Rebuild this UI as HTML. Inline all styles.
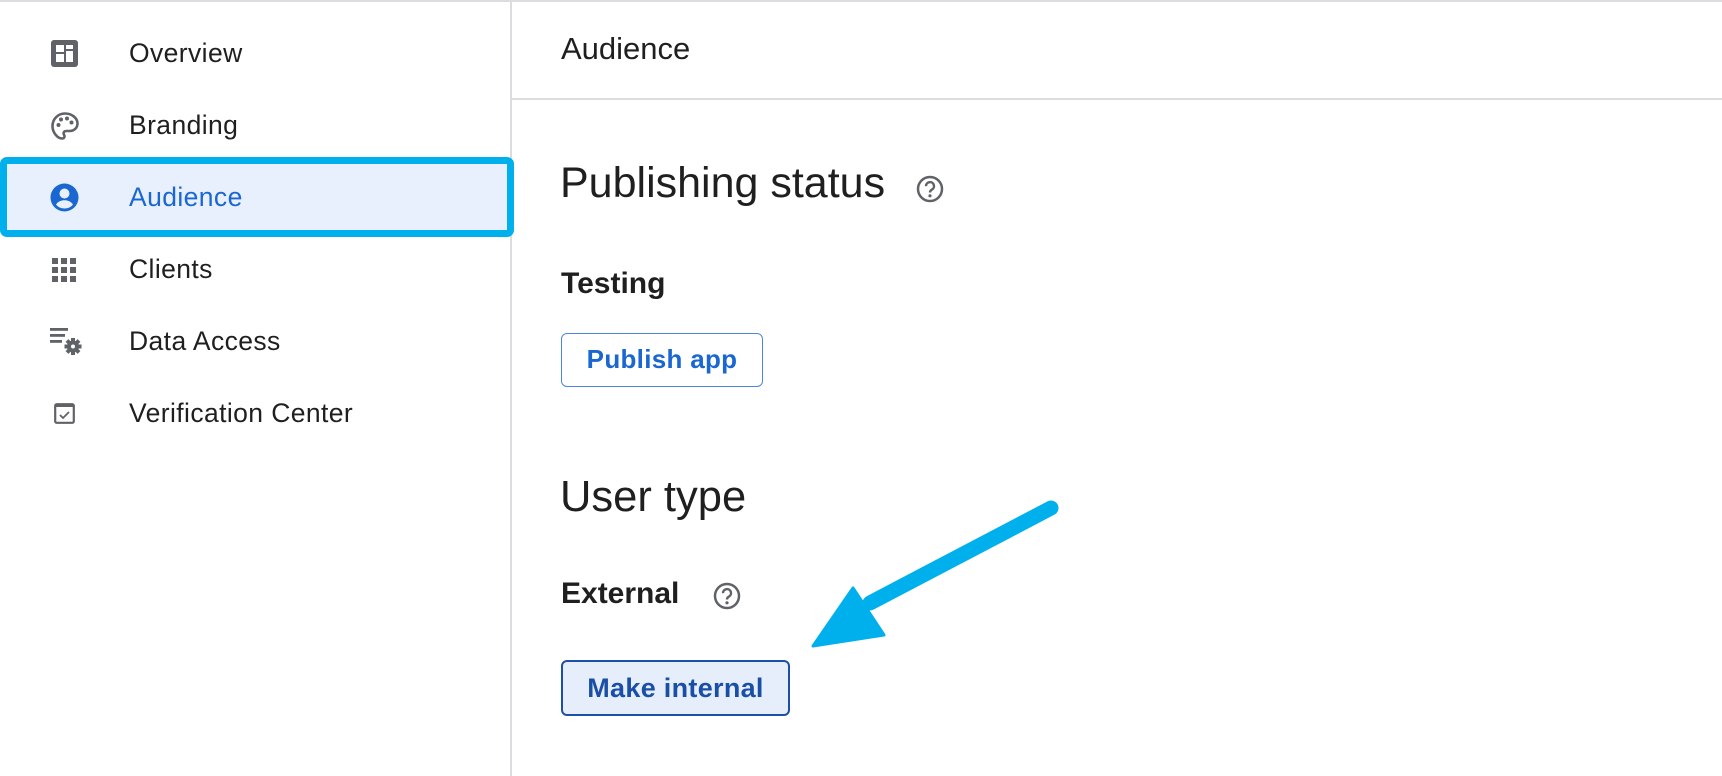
<!DOCTYPE html>
<html><head><style>
*{margin:0;padding:0;box-sizing:border-box}
body{width:1722px;height:776px;background:#fff;font-family:"Liberation Sans",Arial,sans-serif;position:relative;overflow:hidden;color:#1f1f1f}
.abs{position:absolute}
.nav{position:absolute;left:129px;font-size:26.5px;letter-spacing:0.4px;color:#1f1f1f;line-height:30px}
.ic{position:absolute;left:50px}
</style></head><body>
<div class="abs" style="left:0;top:0;width:1722px;height:2px;background:#dadce0"></div>
<div class="abs" style="left:510px;top:0;width:2px;height:776px;background:#dadce0"></div>
<div class="abs" style="left:512px;top:98px;width:1210px;height:2px;background:#dadce0"></div>

<div class="abs" style="left:0;top:157px;width:514px;height:80px;border:7px solid #00b0ec;border-radius:7px;background:#e8f0fe"></div>

<svg class="ic" style="top:39px" width="29" height="29" viewBox="0 0 29 29"><rect x="1" y="1" width="27" height="27" rx="3" fill="#5f6368"/><rect x="6" y="6" width="8" height="7" fill="#fff"/><rect x="6" y="15" width="8" height="8" fill="#fff"/><rect x="16" y="6" width="7" height="4" fill="#fff"/><rect x="16" y="12" width="7" height="11" fill="#fff"/></svg>
<div class="nav" style="top:38px">Overview</div>

<svg class="ic" style="top:111px" width="30" height="30" viewBox="0 0 30 30"><path d="M15 2.5C8 2.5 2.5 8 2.5 15c0 6.5 5 12.5 9.5 12.5 2.5 0 3-2 2-3.8-1-1.8 0-3.7 2.2-3.7h3.5c4.5 0 7.8-3.2 7.8-7.5C27.5 7 21.8 2.5 15 2.5z" fill="none" stroke="#5f6368" stroke-width="2.6"/><circle cx="8.5" cy="14" r="2" fill="#5f6368"/><circle cx="11" cy="8.5" r="2" fill="#5f6368"/><circle cx="17" cy="7.5" r="2" fill="#5f6368"/><circle cx="21.5" cy="11.5" r="2" fill="#5f6368"/></svg>
<div class="nav" style="top:110px">Branding</div>

<svg class="ic" style="top:183px" width="29" height="29" viewBox="0 0 29 29"><circle cx="14.5" cy="14.5" r="14" fill="#1a67d2"/><circle cx="14.5" cy="10.5" r="5" fill="#e8f0fe"/><path d="M6 21.5c2-3 5-4.3 8.5-4.3s6.5 1.3 8.5 4.3c-2 2.6-5 4-8.5 4s-6.5-1.4-8.5-4z" fill="#e8f0fe"/></svg>
<div class="nav" style="top:182px;color:#1a67d2">Audience</div>

<svg class="ic" style="top:258px;left:52px" width="25" height="25" viewBox="0 0 25 25" fill="#5f6368"><rect x="0" y="0" width="6" height="6"/><rect x="9" y="0" width="6" height="6"/><rect x="18" y="0" width="6" height="6"/><rect x="0" y="9" width="6" height="6"/><rect x="9" y="9" width="6" height="6"/><rect x="18" y="9" width="6" height="6"/><rect x="0" y="18" width="6" height="6"/><rect x="9" y="18" width="6" height="6"/><rect x="18" y="18" width="6" height="6"/></svg>
<div class="nav" style="top:254px">Clients</div>

<svg class="ic" style="top:328px" width="32" height="28" viewBox="0 0 32 28"><rect x="0" y="0" width="18" height="2.8" fill="#5f6368"/><rect x="0" y="6" width="15" height="2.8" fill="#5f6368"/><rect x="0" y="12" width="12" height="2.8" fill="#5f6368"/><g transform="translate(23,18.5)" fill="#5f6368"><circle r="6"/><rect x="-2" y="-8.5" width="4" height="17"/><rect x="-8.5" y="-2" width="17" height="4"/><rect x="-2" y="-8.5" width="4" height="17" transform="rotate(45)"/><rect x="-2" y="-8.5" width="4" height="17" transform="rotate(-45)"/><circle r="2" fill="#fff"/></g></svg>
<div class="nav" style="top:326px">Data Access</div>

<svg class="ic" style="top:403px;left:54px" width="21" height="21" viewBox="0 0 21 21"><rect x="1.2" y="1.2" width="18.6" height="18.6" rx="1.5" fill="none" stroke="#5f6368" stroke-width="2.2"/><rect x="1" y="1" width="19" height="3" fill="#5f6368"/><path d="M6 12l3 3 6-6" fill="none" stroke="#5f6368" stroke-width="1.8"/></svg>
<div class="nav" style="top:398px">Verification Center</div>

<div class="abs" style="left:561px;top:31px;font-size:31px;color:#1f1f1f;line-height:36px">Audience</div>

<div class="abs" style="left:560px;top:158px;font-size:43px;line-height:50px;color:#1f1f1f">Publishing status</div>
<svg class="abs" style="left:916px;top:175px" width="28" height="28" viewBox="0 0 28 28"><circle cx="14" cy="14" r="12" fill="none" stroke="#5f6368" stroke-width="2.5"/><path d="M10 11.2a4 4 0 1 1 5.8 3.5c-1.2.7-1.8 1.4-1.8 2.8" fill="none" stroke="#5f6368" stroke-width="2.4"/><circle cx="14" cy="20.8" r="1.6" fill="#5f6368"/></svg>

<div class="abs" style="left:561px;top:266px;font-size:30px;font-weight:bold;color:#1f1f1f;line-height:36px">Testing</div>

<div class="abs" style="left:561px;top:333px;width:202px;height:54px;border:1.5px solid #4a86e0;border-radius:6px;color:#1a67d2;font-size:26px;font-weight:bold;text-align:center;line-height:51px;letter-spacing:0.3px">Publish app</div>

<div class="abs" style="left:560px;top:472px;font-size:43.5px;line-height:50px;color:#1f1f1f">User type</div>

<div class="abs" style="left:561px;top:576px;font-size:30px;font-weight:bold;color:#1f1f1f;line-height:36px">External</div>
<svg class="abs" style="left:713px;top:582px" width="28" height="28" viewBox="0 0 28 28"><circle cx="14" cy="14" r="12" fill="none" stroke="#5f6368" stroke-width="2.5"/><path d="M10 11.2a4 4 0 1 1 5.8 3.5c-1.2.7-1.8 1.4-1.8 2.8" fill="none" stroke="#5f6368" stroke-width="2.4"/><circle cx="14" cy="20.8" r="1.6" fill="#5f6368"/></svg>

<div class="abs" style="left:561px;top:660px;width:229px;height:56px;border:2px solid #1e4fa8;border-radius:6px;background:#e6edfb;color:#1a4fa6;font-size:27px;font-weight:bold;text-align:center;line-height:52px;letter-spacing:0.3px">Make internal</div>

<svg class="abs" style="left:0;top:0" width="1722" height="776"><path d="M1051 508 L870 603" stroke="#00b0ec" stroke-width="15" stroke-linecap="round"/><path d="M813 646 L853 588 L884 635 Z" fill="#00b0ec" stroke="#00b0ec" stroke-width="3" stroke-linejoin="round"/></svg>
</body></html>
